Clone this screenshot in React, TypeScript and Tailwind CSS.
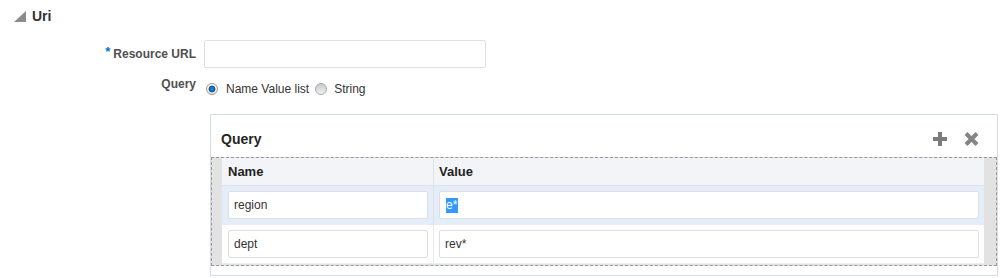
import React from "react";

function RadioOn() {
  return (
    <svg width="12" height="12" viewBox="0 0 12 12">
      <defs>
        <linearGradient id="rg1" x1="0" y1="0" x2="0" y2="1">
          <stop offset="0" stopColor="#ffffff" />
          <stop offset="1" stopColor="#e6e6e6" />
        </linearGradient>
      </defs>
      <circle cx="6" cy="6" r="5.5" fill="url(#rg1)" stroke="#9a9a9a" />
      <circle cx="6" cy="6" r="3" fill="#0a7fd0" stroke="#1f3f5f" strokeWidth="0.9" />
    </svg>
  );
}

function RadioOff() {
  return (
    <svg width="12" height="12" viewBox="0 0 12 12">
      <defs>
        <linearGradient id="rg2" x1="0" y1="0" x2="0" y2="1">
          <stop offset="0" stopColor="#c8c8c8" />
          <stop offset="1" stopColor="#f2f2f2" />
        </linearGradient>
      </defs>
      <circle cx="6" cy="6" r="5.5" fill="url(#rg2)" stroke="#a8a8a8" />
    </svg>
  );
}

function Field({ children, width }: { children?: React.ReactNode; width: string }) {
  return (
    <div
      className={`${width} h-[28px] bg-white border border-[#dcdfe3] rounded-[2px] flex items-center pl-[5px] text-[12px] text-[#333]`}
    >
      {children}
    </div>
  );
}

export default function App() {
  return (
    <div
      className="w-[1008px] h-[278px] bg-white overflow-hidden"
      style={{ fontFamily: '"Liberation Sans", Arial, sans-serif' }}
    >
      {/* Section header */}
      <div className="flex items-center h-[20px] mt-[6px] pl-[14px]">
        <svg width="12" height="11" viewBox="0 0 12 11">
          <polygon points="12,0 12,11 0,11" fill="#8a8c8f" />
        </svg>
        <span className="ml-[6px] text-[14px] leading-[20px] font-bold text-[#333]">Uri</span>
      </div>

      {/* Resource URL row */}
      <div className="flex items-center mt-[14px]">
        <div className="w-[196px] flex justify-end items-center">
          <span className="text-[13px] leading-[13px] text-[#0572ce] font-bold mr-[3px] -mt-[6px]">*</span>
          <span className="text-[12px] leading-[14px] font-bold text-[#4f4f4f]">Resource URL</span>
        </div>
        <div className="ml-[8px]">
          <Field width="w-[282px]" />
        </div>
      </div>

      {/* Query radio row */}
      <div className="flex items-start mt-[9px]">
        <div className="w-[196px] text-right text-[12px] leading-[14px] font-bold text-[#4f4f4f]">Query</div>
        <div className="ml-[10px] pt-[5px] flex items-center text-[12px] leading-[14px] text-[#333]">
          <RadioOn />
          <span className="ml-[8px]">Name Value list</span>
          <span className="ml-[6px] flex"><RadioOff /></span>
          <span className="ml-[7px]">String</span>
        </div>
      </div>

      {/* Query panel */}
      <div className="ml-[210px] mt-[18px] w-[788px] h-[162px] border border-[#d6dde4] flex flex-col">
        <div className="h-[42px] flex items-center justify-between pl-[10px] pr-[18px] pt-[6px]">
          <span className="text-[14px] font-bold text-[#252525]">Query</span>
          <div className="flex items-center">
            <svg width="14" height="14" viewBox="0 0 14 14">
              <rect x="0" y="5" width="14" height="4" fill="#7c7c7c" />
              <rect x="5" y="0" width="4" height="14" fill="#7c7c7c" />
            </svg>
            <svg width="15" height="14" viewBox="0 0 15 14" className="ml-[17px]">
              <path d="M2 1.5 L13 12.5 M13 1.5 L2 12.5" stroke="#858585" strokeWidth="4" />
            </svg>
          </div>
        </div>
        <div className="border border-dashed border-[#9a9a9a] bg-[#e2e2e2] pl-[10px] pr-[12px] pb-[1px]">
          <div className="bg-white">
            {/* header row */}
            <div className="flex h-[28px] bg-[#f2f4f7] border-b border-[#dde3ea] text-[13px] font-bold text-[#1f1f1f]">
              <div className="w-[212px] border-r border-[#dde3ea] pl-[6px] flex items-center">Name</div>
              <div className="flex-1 pl-[5px] flex items-center">Value</div>
            </div>
            {/* row 1 */}
            <div className="flex h-[39px] bg-[#e5eef8]">
              <div className="w-[212px] border-r border-[#dde3ea] pl-[6px] pt-[5px]">
                <Field width="w-[200px]">region</Field>
              </div>
              <div className="flex-1 pl-[5px] pt-[5px] pr-[5px]">
                <Field width="w-full">
                  <span className="ml-px bg-[#3399ff] text-white leading-[15px] pr-[1px]">e*</span>
                </Field>
              </div>
            </div>
            {/* row 2 */}
            <div className="flex h-[39px] bg-white border-b border-[#eceff2]">
              <div className="w-[212px] border-r border-[#e6eaee] pl-[6px] pt-[5px]">
                <Field width="w-[200px]">dept</Field>
              </div>
              <div className="flex-1 pl-[5px] pt-[5px] pr-[5px]">
                <Field width="w-full">rev*</Field>
              </div>
            </div>
          </div>
        </div>
      </div>
    </div>
  );
}
